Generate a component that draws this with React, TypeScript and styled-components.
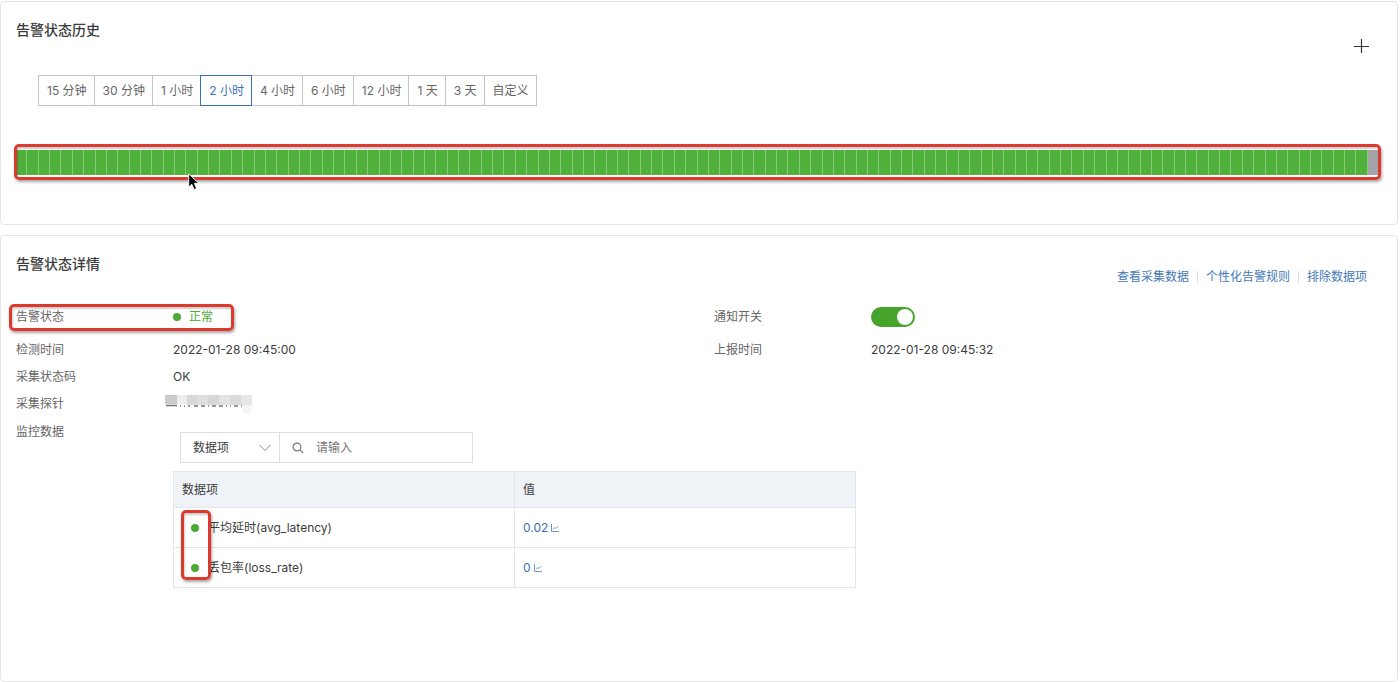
import React, { useState } from 'react';
import styled, { createGlobalStyle, css } from 'styled-components';

const GlobalStyle = createGlobalStyle`
  *, *::before, *::after { box-sizing: border-box; }
  body {
    margin: 0;
    background: #fff;
    color: #3c3c3c;
    font-family: Inter, "Noto Sans CJK SC", sans-serif;
    font-size: 12px;
    line-height: 20px;
  }
  button, input, select { font: inherit; color: inherit; }
`;

const Page = styled.main`
  display: flex;
  flex-direction: column;
  gap: 10px;
  min-height: 100vh;
  padding: 1px 2px 0 0;
`;

const Card = styled.section<{ $grow?: boolean }>`
  display: flow-root;
  padding: 18px 15px;
  border: 1px solid #e5e5e5;
  border-radius: 4px;
  ${(p) => p.$grow && 'flex: 1;'}
`;

const HistoryCard = styled(Card)`
  padding-bottom: 49px;
`;

const Title = styled.h2`
  margin: 0;
  font-size: 14px;
  line-height: 20px;
  font-weight: 500;
`;

const CardHeader = styled.header`
  display: flex;
  justify-content: space-between;
  align-items: flex-start;
  height: 36px;
`;

const PlusButton = styled.button`
  display: flex;
  margin: 18px 13px 0 0;
  padding: 0;
  border: 0;
  background: none;
`;

const RangeGroup = styled.div`
  display: flex;
  margin: 19px 22px 0;
`;

const RangeButton = styled.button<{ $active: boolean }>`
  height: 31px;
  margin-right: -1px;
  padding: 0 7px 0 8px;
  border: 1px solid ${(p) => (p.$active ? '#3a6fc0' : '#c4c4c4')};
  background: #fff;
  color: ${(p) => (p.$active ? '#3a6fc0' : '#666')};
  white-space: nowrap;
  ${(p) =>
    p.$active &&
    css`
      position: relative;
      z-index: 1;
    `}
`;

const Highlight = styled.span<{ $inset: string; $width?: number }>`
  position: absolute;
  inset: ${(p) => p.$inset};
  ${(p) => p.$width && `width: ${p.$width}px;`}
  border: 3px solid #dc3a2f;
  border-radius: 5px;
  box-shadow: 1px 2px 3px rgba(0, 0, 0, 0.35), inset 1px 2px 2px rgba(0, 0, 0, 0.2);
  pointer-events: none;
`;

const Timeline = styled.div`
  position: relative;
  display: flex;
  height: 25px;
  margin: 44px 2px 0 0;
`;

const Segment = styled.span<{ $empty: boolean }>`
  flex: 1;
  border-right: 1px solid ${(p) => (p.$empty ? '#a3a3a8' : '#87cb7b')};
  background: ${(p) => (p.$empty ? '#a3a3a8' : '#4fb13c')};
`;

const Pointer = styled.svg`
  position: absolute;
  top: 23px;
  left: 172px;
`;

const Links = styled.nav`
  display: flex;
  align-items: center;
  margin: 13px 15px 0 0;
`;

const TextLink = styled.a`
  color: #4478b8;
  text-decoration: none;
  line-height: 20px;
  & + & {
    display: flex;
    align-items: center;
  }
  & + &::before {
    content: '';
    width: 1px;
    height: 12px;
    margin: 0 8px;
    background: #ddd;
  }
`;

const Details = styled.div`
  display: grid;
  grid-template-columns: 1fr 1fr;
  column-gap: 30px;
  margin-top: 8px;
`;

const Field = styled.div<{ $tall?: boolean }>`
  position: relative;
  display: grid;
  grid-template-columns: 157px 1fr;
  align-items: center;
  grid-column-start: 1;
  height: ${(p) => (p.$tall ? 38 : 27)}px;
`;

const RightField = styled(Field)`
  grid-column-start: 2;
`;

const Label = styled.span`
  color: #666;
`;

const Value = styled.span`
  display: flex;
  align-items: center;
`;

const Dot = styled.i`
  flex: none;
  width: 8px;
  height: 8px;
  border-radius: 50%;
  background: #4aaa35;
`;

const Status = styled(Value)`
  gap: 8px;
  color: #4aaa35;
`;

const Switch = styled.input`
  appearance: none;
  width: 44px;
  height: 20px;
  margin: 0;
  border-radius: 10px;
  background: #46a32b;
  display: flex;
  align-items: center;
  justify-content: flex-end;
  padding: 2px;
  &::before {
    content: '';
    width: 16px;
    height: 16px;
    border-radius: 50%;
    background: #fff;
  }
  &:not(:checked) {
    justify-content: flex-start;
    background: #bbb;
  }
`;

const Mask = styled.svg`
  margin-left: -8px;
`;

const Monitor = styled.div`
  display: grid;
  grid-template-columns: 157px 50%;
  margin-top: 5px;
`;

const MonitorLabel = styled(Label)`
  line-height: 20px;
`;

const Filter = styled.div`
  display: flex;
  width: 293px;
  height: 31px;
  margin: 10px 0 8px 7px;
  border: 1px solid #dedede;
`;

const SelectBox = styled.label`
  display: grid;
  flex: none;
  grid-template-columns: 1fr 14px;
  align-items: center;
  width: 99px;
  padding: 0 7px 0 12px;
  border-right: 1px solid #dedede;
`;

const Select = styled.select`
  appearance: none;
  width: 100%;
  padding: 0;
  border: 0;
  background: none;
  outline: none;
`;

const SearchBox = styled.label`
  display: flex;
  flex: 1;
  min-width: 0;
  align-items: center;
  gap: 12px;
  padding: 0 12px;
`;

const SearchInput = styled.input`
  flex: 1;
  min-width: 0;
  padding: 0;
  border: 0;
  outline: none;
  background: none;
  &::placeholder { color: #777; opacity: 1; }
`;

const TableWrap = styled.div`
  position: relative;
`;

const Table = styled.table`
  width: 100%;
  table-layout: fixed;
  border-collapse: collapse;
  th, td {
    height: 40px;
    padding: 0 8px;
    border: 1px solid #e3e5e7;
    text-align: left;
    font-weight: 400;
  }
  th {
    height: 36px;
    background: #eff3f8;
  }
`;

const Metric = styled.span`
  display: flex;
  align-items: center;
  gap: 9px;
  padding-left: 9px;
`;

const MetricLink = styled.a`
  display: inline-flex;
  align-items: center;
  gap: 3px;
  color: #3d6fb4;
  text-decoration: none;
`;

const ranges = ['15 分钟', '30 分钟', '1 小时', '2 小时', '4 小时', '6 小时', '12 小时', '1 天', '3 天', '自定义'];
const segments = Array.from({ length: 120 }, (_, i) => i === 119);
const links = ['查看采集数据', '个性化告警规则', '排除数据项'];
const metrics = [
  { name: '平均延时(avg_latency)', value: '0.02' },
  { name: '丢包率(loss_rate)', value: '0' },
];

const maskTiles: [number, number, number, number, string][] = [
  [0, 0, 12, 9, '#cbcbcb'],
  [12, 0, 10, 9, '#ececec'],
  [22, 0, 10, 10, '#d8d8d8'],
  [32, 0, 11, 10, '#dedede'],
  [43, 0, 11, 10, '#d6d6d6'],
  [54, 0, 11, 10, '#e3e3e3'],
  [65, 0, 11, 10, '#dadada'],
  [76, 0, 11, 10, '#e6e6e6'],
  [78, 10, 8, 8, '#f4f4f4'],
];

const ChartIcon = () => (
  <svg width="8" height="8" viewBox="0 0 8 8" fill="none" stroke="#7394c6" aria-hidden="true">
    <path d="M.5 0v7.5H8" />
    <path d="M2 5.3l1.5-1.8 1.3 1L7.2 2" strokeWidth=".9" />
  </svg>
);

export default function App() {
  const [range, setRange] = useState('2 小时');
  const [notify, setNotify] = useState(true);

  return (
    <>
      <GlobalStyle />
      <Page>
        <HistoryCard>
          <CardHeader>
            <Title>告警状态历史</Title>
            <PlusButton aria-label="添加">
              <svg width="16" height="16" viewBox="0 0 16 16" stroke="#333" strokeWidth="1.2">
                <path d="M8.5 1v14M1 8.5h15" />
              </svg>
            </PlusButton>
          </CardHeader>
          <RangeGroup>
            {ranges.map((r) => (
              <RangeButton key={r} $active={r === range} onClick={() => setRange(r)}>
                {r}
              </RangeButton>
            ))}
          </RangeGroup>
          <Timeline>
            {segments.map((empty, i) => (
              <Segment key={i} $empty={empty} />
            ))}
            <Highlight $inset="-6px -1px -5px -2px" />
            <Pointer width="12" height="18" viewBox="0 0 12 18">
              <path
                d="M.7.8v13.4l3.1-3 2.3 5.4 2.5-1.1-2.3-5.2h4.500z"
                fill="#000"
                stroke="#fff"
                strokeWidth=".9"
              />
            </Pointer>
          </Timeline>
        </HistoryCard>

        <Card $grow>
          <CardHeader>
            <Title>告警状态详情</Title>
            <Links>
              {links.map((l) => (
                <TextLink key={l} href="#">
                  {l}
                </TextLink>
              ))}
            </Links>
          </CardHeader>
          <Details>
            <Field $tall>
              <Label>告警状态</Label>
              <Status>
                <Dot />
                正常
              </Status>
              <Highlight $inset="6px auto 5px -7px" $width={225} />
            </Field>
            <RightField $tall>
              <Label as="label" htmlFor="notify">
                通知开关
              </Label>
              <Switch
                id="notify"
                type="checkbox"
                role="switch"
                checked={notify}
                onChange={(e) => setNotify(e.target.checked)}
              />
            </RightField>
            <Field>
              <Label>检测时间</Label>
              <Value>2022-01-28 09:45:00</Value>
            </Field>
            <RightField>
              <Label>上报时间</Label>
              <Value>2022-01-28 09:45:32</Value>
            </RightField>
            <Field>
              <Label>采集状态码</Label>
              <Value>OK</Value>
            </Field>
            <Field>
              <Label>采集探针</Label>
              <Mask width="88" height="18" viewBox="0 0 88 18" aria-hidden="true">
                {maskTiles.map(([x, y, w, h, fill]) => (
                  <rect key={`${x}-${y}`} x={x} y={y} width={w} height={h} fill={fill} />
                ))}
                <path d="M1 10.500h11" stroke="#777" strokeWidth="1.6" />
                <path
                  d="M15 11h1m3 0h1m3 0h2m4 0h4m3 0h4m3 0h1m3 0h4m3 0h4m3 0h1m3 0h1m3 0h4m3 0h1"
                  stroke="#777"
                  strokeWidth="1.5"
                />
              </Mask>
            </Field>
          </Details>
          <Monitor>
            <MonitorLabel>监控数据</MonitorLabel>
            <div>
              <Filter>
                <SelectBox>
                  <Select aria-label="筛选字段">
                    <option>数据项</option>
                  </Select>
                  <svg width="14" height="8" viewBox="0 0 14 8" fill="none" stroke="#888" aria-hidden="true">
                    <path d="M1.500 1l5.500 5.500L12.500 1" />
                  </svg>
                </SelectBox>
                <SearchBox>
                  <svg width="12" height="12" viewBox="0 0 12 12" fill="none" stroke="#777" strokeWidth="1.2" aria-hidden="true">
                    <circle cx="5" cy="5" r="3.9" />
                    <path d="M7.800 7.800L11 11" />
                  </svg>
                  <SearchInput placeholder="请输入" aria-label="搜索" />
                </SearchBox>
              </Filter>
              <TableWrap>
                <Table>
                  <thead>
                    <tr>
                      <th>数据项</th>
                      <th>值</th>
                    </tr>
                  </thead>
                  <tbody>
                    {metrics.map((m) => (
                      <tr key={m.name}>
                        <td>
                          <Metric>
                            <Dot />
                            {m.name}
                          </Metric>
                        </td>
                        <td>
                          <MetricLink href="#">
                            {m.value}
                            <ChartIcon />
                          </MetricLink>
                        </td>
                      </tr>
                    ))}
                  </tbody>
                </Table>
                <Highlight $inset="39px auto 8px 8px" $width={30} />
              </TableWrap>
            </div>
          </Monitor>
        </Card>
      </Page>
    </>
  );
}
